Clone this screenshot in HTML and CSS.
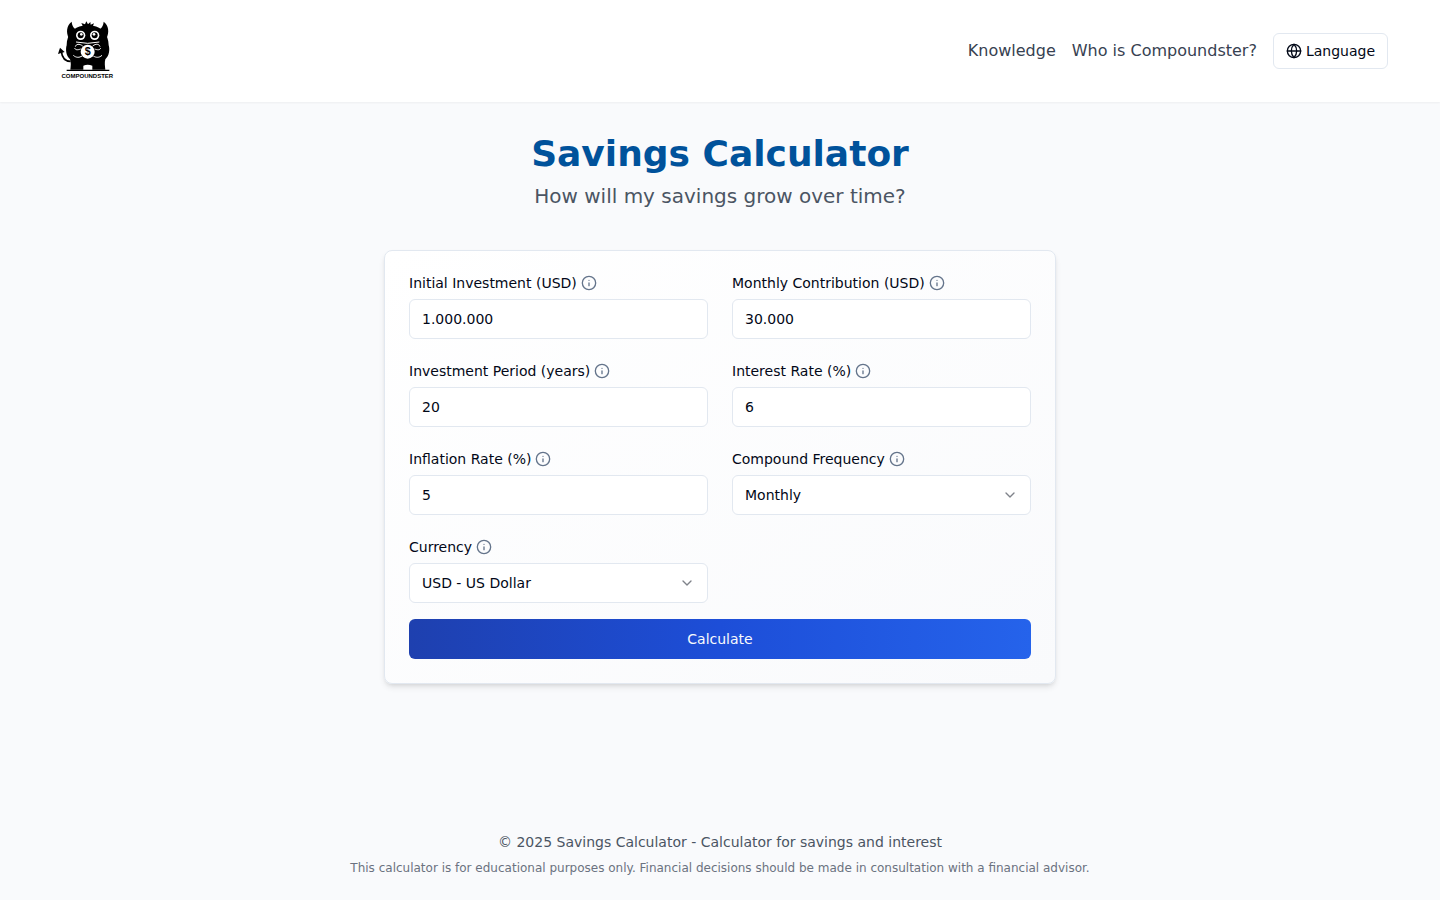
FILE: index.html
```
<!DOCTYPE html>
<html lang="en">
<head>
    <meta charset="UTF-8">
    <meta name="viewport" content="width=device-width, initial-scale=1.0">
    <title>Savings Calculator</title>
    <link rel="stylesheet" href="styles.css">
</head>
<body>
    <!-- shared icons -->
    <svg class="sprite" aria-hidden="true">
        <symbol id="info" viewBox="0 0 24 24">
            <circle cx="12" cy="12" r="10"/>
            <path d="M12 16v-4"/>
            <path d="M12 8h.01"/>
        </symbol>
        <symbol id="chevron" viewBox="0 0 24 24">
            <path d="m6 9 6 6 6-6"/>
        </symbol>
        <symbol id="globe" viewBox="0 0 24 24">
            <circle cx="12" cy="12" r="10"/>
            <path d="M12 2a14.5 14.5 0 0 0 0 20 14.5 14.5 0 0 0 0-20"/>
            <path d="M2 12h20"/>
        </symbol>
    </svg>

    <header class="header">
        <div class="header-inner">
            <a class="logo" href="#" aria-label="Compoundster">
                <svg viewBox="6 12 210 210">
                    <!-- horns -->
                    <path d="M65 29C50 40 47 60 57 80L84 54C72 52 66 42 65 29Z"/>
                    <path d="M161 29C176 40 179 60 169 80L142 54C154 52 160 42 161 29Z"/>
                    <!-- body -->
                    <path d="M50 100C50 66 72 45 98 41L94 33L105 37L109 28L114 37L121 30L122 38L132 34L129 41C154 45 176 66 176 100C180 112 178 132 166 142C163 152 165 164 166 173H127V161Q113 156 100 161V173H61C62 164 64 152 60 142C48 132 46 112 50 100Z"/>
                    <path d="M50 175H178" fill="none" stroke="#000" stroke-width="4"/>
                    <!-- tail -->
                    <path d="M62 148C46 148 36 136 34 118" fill="none" stroke="#000" stroke-width="5"/>
                    <path d="M24 126L30 107L44 120Z"/>
                    <!-- eyes -->
                    <circle cx="92" cy="70" r="14" fill="#fff"/>
                    <circle cx="134" cy="70" r="14" fill="#fff"/>
                    <circle cx="92" cy="70" r="9"/>
                    <circle cx="134" cy="70" r="9"/>
                    <circle cx="94" cy="67" r="4" fill="#fff"/>
                    <circle cx="132" cy="67" r="4" fill="#fff"/>
                    <!-- mouth and arms -->
                    <path d="M78 90Q113 98 148 90M76 104C78 96 88 94 98 102M150 104C148 96 138 94 128 102M74 108C76 115 84 114 92 111M152 108C150 115 142 114 134 111M70 130C79 138 88 137 96 132M156 130C147 138 138 137 130 132" fill="none" stroke="#fff" stroke-width="3"/>
                    <!-- coin -->
                    <circle cx="113" cy="119" r="21" fill="#fff"/>
                    <text class="logo-coin" x="113" y="130">$</text>
                    <text class="logo-name" x="112" y="197">COMPOUNDSTER</text>
                </svg>
            </a>
            <nav class="nav">
                <a href="#">Knowledge</a>
                <a href="#">Who is Compoundster?</a>
                <button type="button" class="language-button">
                    <svg class="icon"><use href="#globe"/></svg>
                    Language
                </button>
            </nav>
        </div>
    </header>

    <main class="main">
        <h1>Savings Calculator</h1>
        <p class="subtitle">How will my savings grow over time?</p>

        <form class="card">
            <div class="fields">
                <div class="field">
                    <div class="label-row">
                        <label for="initial">Initial Investment (USD)</label>
                        <button type="button" class="info-button" aria-label="About initial investment"><svg class="icon"><use href="#info"/></svg></button>
                    </div>
                    <input type="text" id="initial" value="1.000.000">
                </div>
                <div class="field">
                    <div class="label-row">
                        <label for="monthly">Monthly Contribution (USD)</label>
                        <button type="button" class="info-button" aria-label="About monthly contribution"><svg class="icon"><use href="#info"/></svg></button>
                    </div>
                    <input type="text" id="monthly" value="30.000">
                </div>
                <div class="field">
                    <div class="label-row">
                        <label for="period">Investment Period (years)</label>
                        <button type="button" class="info-button" aria-label="About investment period"><svg class="icon"><use href="#info"/></svg></button>
                    </div>
                    <input type="text" id="period" value="20">
                </div>
                <div class="field">
                    <div class="label-row">
                        <label for="interest">Interest Rate (%)</label>
                        <button type="button" class="info-button" aria-label="About interest rate"><svg class="icon"><use href="#info"/></svg></button>
                    </div>
                    <input type="text" id="interest" value="6">
                </div>
                <div class="field">
                    <div class="label-row">
                        <label for="inflation">Inflation Rate (%)</label>
                        <button type="button" class="info-button" aria-label="About inflation rate"><svg class="icon"><use href="#info"/></svg></button>
                    </div>
                    <input type="text" id="inflation" value="5">
                </div>
                <div class="field">
                    <div class="label-row">
                        <label for="frequency">Compound Frequency</label>
                        <button type="button" class="info-button" aria-label="About compound frequency"><svg class="icon"><use href="#info"/></svg></button>
                    </div>
                    <div class="select-wrap">
                        <select id="frequency">
                            <option>Monthly</option>
                        </select>
                        <svg class="icon chevron"><use href="#chevron"/></svg>
                    </div>
                </div>
                <div class="field">
                    <div class="label-row">
                        <label for="currency">Currency</label>
                        <button type="button" class="info-button" aria-label="About currency"><svg class="icon"><use href="#info"/></svg></button>
                    </div>
                    <div class="select-wrap">
                        <select id="currency">
                            <option>USD - US Dollar</option>
                        </select>
                        <svg class="icon chevron"><use href="#chevron"/></svg>
                    </div>
                </div>
            </div>
            <button type="button" class="calculate-button">Calculate</button>
        </form>
    </main>

    <footer class="footer">
        <p>© 2025 Savings Calculator - Calculator for savings and interest</p>
        <p class="disclaimer">This calculator is for educational purposes only. Financial decisions should be made in consultation with a financial advisor.</p>
    </footer>
</body>
</html>
```
FILE: styles.css
```
* {
    box-sizing: border-box;
    margin: 0;
    padding: 0;
}

body {
    display: flex;
    flex-direction: column;
    min-height: 100vh;
    background-color: #f9fafc;
    color: #020817;
    font-family: "DejaVu Sans", sans-serif;
    font-size: 16px;
    line-height: 24px;
}

button,
input,
select {
    font: inherit;
    color: inherit;
}

button {
    cursor: pointer;
}

.sprite {
    display: none;
}

.icon {
    width: 16px;
    height: 16px;
    flex-shrink: 0;
    fill: none;
    stroke: currentColor;
    stroke-width: 2;
    stroke-linecap: round;
    stroke-linejoin: round;
}

.header {
    background-color: #fff;
    box-shadow: 0 1px 2px rgba(0, 0, 0, 0.05);
}

.header-inner {
    display: flex;
    align-items: center;
    justify-content: space-between;
    max-width: 1400px;
    margin: 0 auto;
    padding: 16px 32px;
}

.logo svg {
    display: block;
    width: 70px;
    height: 70px;
}

.logo text {
    font-family: "Liberation Sans", sans-serif;
    font-weight: bold;
    text-anchor: middle;
}

.logo-coin {
    font-size: 32px;
}

.logo-name {
    font-size: 18px;
}

.nav {
    display: flex;
    align-items: center;
    gap: 16px;
}

.nav a {
    color: #374151;
    text-decoration: none;
}

.language-button {
    display: flex;
    align-items: center;
    gap: 4px;
    height: 36px;
    padding: 0 12px;
    background-color: #fff;
    border: 1px solid #e2e8f0;
    border-radius: 6px;
    font-size: 14px;
}

.main {
    flex: 1;
    padding: 32px 16px;
}

h1 {
    margin-bottom: 8px;
    color: #00529b;
    font-size: 36px;
    line-height: 40px;
    text-align: center;
}

.subtitle {
    margin-bottom: 40px;
    color: #4b5563;
    font-size: 20px;
    line-height: 28px;
    text-align: center;
}

.card {
    max-width: 672px;
    margin: 0 auto;
    padding: 24px;
    background: linear-gradient(to bottom right, #fff, #f9fafc);
    border: 1px solid #e2e8f0;
    border-radius: 8px;
    box-shadow: 0 4px 6px -1px rgba(0, 0, 0, 0.1), 0 2px 4px -2px rgba(0, 0, 0, 0.1);
    font-size: 14px;
}

.fields {
    display: grid;
    grid-template-columns: 1fr 1fr;
    gap: 24px;
    margin-bottom: 16px;
}

.label-row {
    display: flex;
    align-items: center;
    gap: 4px;
    margin-bottom: 8px;
    line-height: 16px;
}

.info-button {
    display: flex;
    background: none;
    border: none;
    color: #64748b;
}

.field input,
.field select {
    display: block;
    width: 100%;
    height: 40px;
    padding: 0 12px;
    background-color: #fff;
    border: 1px solid #e2e8f0;
    border-radius: 6px;
    appearance: none;
}

.select-wrap {
    position: relative;
}

.chevron {
    position: absolute;
    top: 12px;
    right: 13px;
    opacity: 0.5;
    pointer-events: none;
}

.calculate-button {
    display: block;
    width: 100%;
    height: 40px;
    background: linear-gradient(to right, #1e40af, #1d4ed8, #2563eb);
    border: none;
    border-radius: 6px;
    color: #f8fafc;
}

.footer {
    padding: 24px 16px;
    color: #4b5563;
    font-size: 14px;
    line-height: 20px;
    text-align: center;
}

.disclaimer {
    margin-top: 8px;
    color: #6b7280;
    font-size: 12px;
    line-height: 16px;
}
```
